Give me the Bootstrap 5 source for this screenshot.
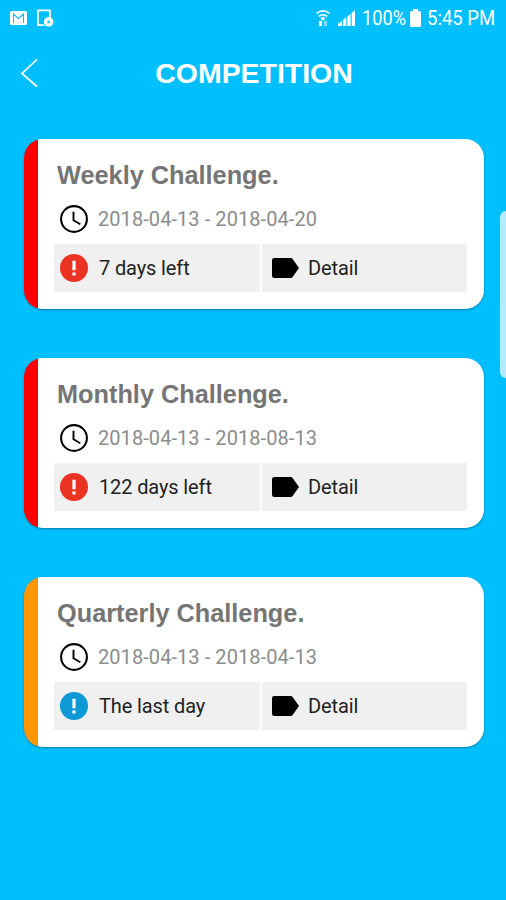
<!DOCTYPE html>
<html lang="en">
<head>
<meta charset="utf-8">
<meta name="viewport" content="width=device-width, initial-scale=1">
<title>Competition</title>
<link href="https://cdn.jsdelivr.net/npm/bootstrap@5.3.0/dist/css/bootstrap.min.css" rel="stylesheet">
<style>
  body { background: #00bfff; font-family: Roboto, "Liberation Sans", sans-serif; min-height: 900px; overflow: hidden; }
  svg { display: block; flex: none; }
  .status-bar { height: 36px; padding: 0 11px 0 10px; font-size: 20px; line-height: 36px; }
  .status-bar .device { margin-left: 9px; }
  .status-bar .pct { width: 48px; margin-left: 6px; transform: scaleX(.91); transform-origin: left; white-space: nowrap; }
  .status-bar .clock { width: 68px; margin-left: 6px; transform: scaleX(.925); transform-origin: left; white-space: nowrap; }
  .title-bar { height: 74px; padding: 0 38px 0 20px; }
  .title-bar h1 { font: bold 28.5px/74px "Liberation Sans", Arial, sans-serif; letter-spacing: -.05px; }
  .challenges { padding: 29px 22px 0 24px; gap: 49px; }
  .challenge { height: 170px; border-radius: 19px; padding: 20px 17px 0 30px;
    background: linear-gradient(90deg, var(--stripe) 14px, #fff 14px); box-shadow: 0 1px 2px rgba(0,60,90,.55); }
  .stripe-red { --stripe: #f00; }
  .stripe-orange { --stripe: #ff9800; }
  .challenge h2 { font: bold 25.3px/32px "Liberation Sans", Arial, sans-serif; color: #757575; padding-left: 3px; }
  .dates { height: 53px; padding: 3px 0 0 6px; gap: 10px; font-size: 20px; color: #8c8c8c; letter-spacing: .07px; }
  .cells { gap: 2px; }
  .cell { height: 48px; background: #f0f0f0; font-size: 20px; color: #222; letter-spacing: -.12px; }
  .cell-left { width: 206px; padding-left: 6px; gap: 11px; }
  .cell-right { padding-left: 10px; gap: 9px; }
  .edge-handle { position: absolute; right: -6px; top: 211px; width: 12px; height: 167px; border-radius: 6px; background: #b3ecff; }
</style>
</head>
<body class="position-relative">
<svg width="0" height="0" class="position-absolute" aria-hidden="true">
  <symbol id="clock" viewBox="0 0 28 28">
    <circle cx="14" cy="14" r="12.9" fill="none" stroke="#000" stroke-width="2.1"/>
    <path d="M13.5 6.8v8.4l6.8 4" fill="none" stroke="#000" stroke-width="1.9"/>
  </symbol>
  <symbol id="alert" viewBox="0 0 28 28">
    <circle cx="14" cy="14" r="14" fill="currentColor"/>
    <path d="M12.4 6.8h3.2v9.4h-3.2zM12.4 18.4h3.2v3h-3.2z" fill="#fff"/>
  </symbol>
  <symbol id="tag" viewBox="0 0 27 20">
    <path d="M2.3 0H18.6q1.4 0 2.2 1.2L27 10l-6.2 8.8Q20 20 18.6 20H2.3Q0 20 0 17.7V2.3Q0 0 2.3 0z"/>
  </symbol>
</svg>

<div class="status-bar d-flex align-items-center text-white">
  <svg class="mail" width="17" height="14" viewBox="0 0 17 14"><rect width="17" height="14" rx="1.5" fill="#fff"/><path d="M3.5 12V3l5 4.5 5-4.5v9" fill="none" stroke="#00bfff" stroke-width="1.1"/></svg>
  <svg class="device" width="18" height="18" viewBox="0 0 18 18"><path d="M8 16.2H2V1.4h12V9" fill="none" stroke="#fff" stroke-width="1.7" stroke-linejoin="round"/><circle cx="12.6" cy="12.8" r="4.8" fill="#fff"/><path d="M11.6 11l3 1.9-3 1.9z" fill="#00bfff"/></svg>
  <svg class="ms-auto" width="14" height="18" viewBox="0 0 14 18"><path d="M.5 4.5Q7-.8 13.5 4.5M2.7 7.4Q7 4 11.3 7.4" fill="none" stroke="#fff" stroke-width="1.6"/><path d="M4.5 9Q7 7.2 9.5 9L7 12z" fill="#fff"/><path d="M3 12h3v5H3z" fill="#fff"/><path d="M8 12h3v5H8z" fill="#fff" opacity=".5"/></svg>
  <svg class="ms-2" width="18" height="18" viewBox="0 0 18 18"><path d="M0 17v-2l3.8-3v5zM4.9 17v-6l3.4-2.7V17zM9.4 17V7.5l3.2-2.5v12zM13.7 17V4L17 1.2V17z" fill="#fff"/></svg>
  <span class="pct">100%</span>
  <svg width="11" height="18" viewBox="0 0 11 18"><path d="M3 0h5v2h1.5Q11 2 11 3.5v13Q11 18 9.5 18h-8Q0 18 0 16.5v-13Q0 2 1.5 2H3z" fill="#fff"/></svg>
  <span class="clock">5:45 PM</span>
</div>

<header class="title-bar d-flex align-items-center text-white">
  <svg width="20" height="30" viewBox="0 0 20 30"><path d="M17 1.5L2 15.5l15 13" fill="none" stroke="#fff" stroke-width="1.7"/></svg>
  <h1 class="flex-grow-1 text-center m-0">COMPETITION</h1>
</header>

<main class="challenges d-flex flex-column">
  <section class="challenge stripe-red">
    <h2 class="m-0">Weekly Challenge.</h2>
    <div class="dates d-flex align-items-center"><svg width="28" height="28"><use href="#clock"/></svg><span>2018-04-13 - 2018-04-20</span></div>
    <div class="cells d-flex">
      <div class="cell cell-left d-flex align-items-center"><svg width="28" height="28" color="#ea3323"><use href="#alert"/></svg><span>7 days left</span></div>
      <div class="cell cell-right d-flex align-items-center flex-grow-1"><svg width="27" height="20"><use href="#tag"/></svg><span>Detail</span></div>
    </div>
  </section>
  <section class="challenge stripe-red">
    <h2 class="m-0">Monthly Challenge.</h2>
    <div class="dates d-flex align-items-center"><svg width="28" height="28"><use href="#clock"/></svg><span>2018-04-13 - 2018-08-13</span></div>
    <div class="cells d-flex">
      <div class="cell cell-left d-flex align-items-center"><svg width="28" height="28" color="#ea3323"><use href="#alert"/></svg><span>122 days left</span></div>
      <div class="cell cell-right d-flex align-items-center flex-grow-1"><svg width="27" height="20"><use href="#tag"/></svg><span>Detail</span></div>
    </div>
  </section>
  <section class="challenge stripe-orange">
    <h2 class="m-0">Quarterly Challenge.</h2>
    <div class="dates d-flex align-items-center"><svg width="28" height="28"><use href="#clock"/></svg><span>2018-04-13 - 2018-04-13</span></div>
    <div class="cells d-flex">
      <div class="cell cell-left d-flex align-items-center"><svg width="28" height="28" color="#0d98d6"><use href="#alert"/></svg><span>The last day</span></div>
      <div class="cell cell-right d-flex align-items-center flex-grow-1"><svg width="27" height="20"><use href="#tag"/></svg><span>Detail</span></div>
    </div>
  </section>
</main>
<div class="edge-handle"></div>
<script src="https://cdn.jsdelivr.net/npm/bootstrap@5.3.0/dist/js/bootstrap.bundle.min.js"></script>
</body>
</html>
